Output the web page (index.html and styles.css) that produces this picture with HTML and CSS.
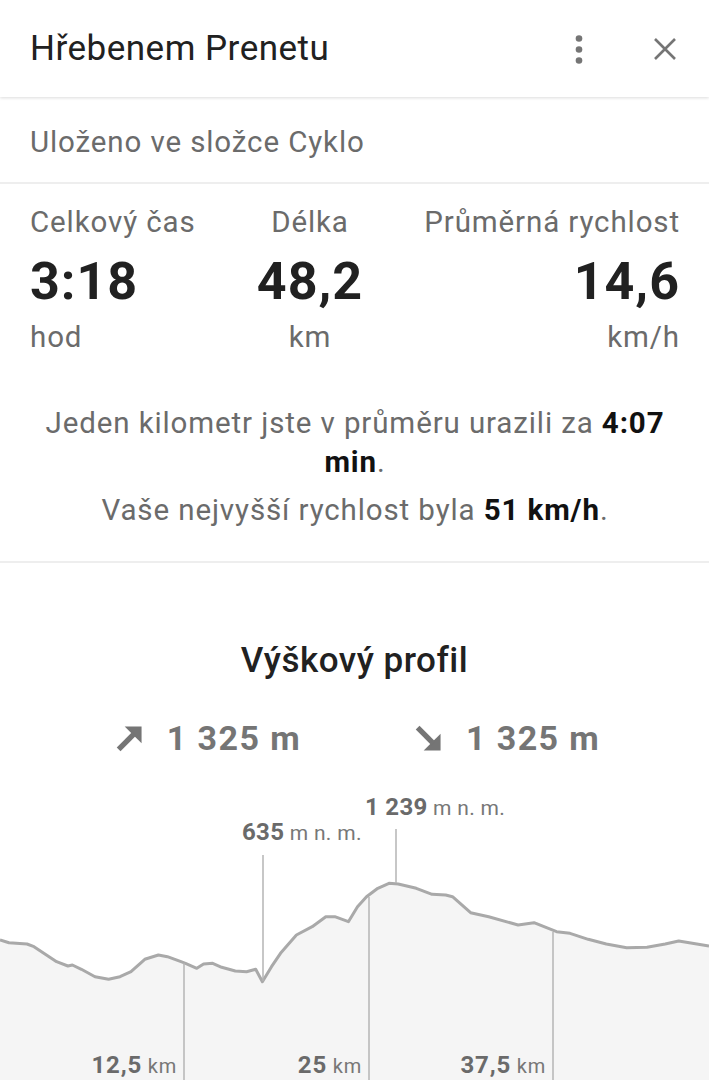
FILE: index.html
```html
<!DOCTYPE html>
<html lang="cs">
  <head>
    <meta charset="UTF-8" />
    <title>Hřebenem Prenetu</title>
    <link rel="stylesheet" href="styles.css">
  </head>
  <body>
    <header class="topbar">
      <h1>Hřebenem Prenetu</h1>
      <div class="actions">
        <!-- more menu -->
        <svg class="icon" viewBox="0 0 24 24" width="24" height="24">
          <circle cx="12" cy="1.5" r="3.3" />
          <circle cx="12" cy="12.5" r="3.3" />
          <circle cx="12" cy="23.5" r="3.3" />
        </svg>
        <!-- close -->
        <svg class="icon" viewBox="0 0 24 24" width="24" height="24">
          <path d="M2 2 L22 22 M22 2 L2 22" class="stroke" />
        </svg>
      </div>
    </header>

    <div class="folder">Uloženo ve složce Cyklo</div>

    <section class="stats">
      <div class="stats-row">
        <div class="stat">
          <div class="stat-label">Celkový čas</div>
          <div class="stat-value">3:18</div>
          <div class="stat-unit">hod</div>
        </div>
        <div class="stat">
          <div class="stat-label">Délka</div>
          <div class="stat-value">48,2</div>
          <div class="stat-unit">km</div>
        </div>
        <div class="stat">
          <div class="stat-label">Průměrná rychlost</div>
          <div class="stat-value">14,6</div>
          <div class="stat-unit">km/h</div>
        </div>
      </div>

      <div class="notes">
        <p>Jeden kilometr jste v průměru urazili za <b>4:07</b> <b>min</b>.</p>
        <p>Vaše nejvyšší rychlost byla <b>51 km/h</b>.</p>
      </div>
    </section>

    <section class="elevation">
      <h2>Výškový profil</h2>

      <div class="gain">
        <div class="gain-item">
          <svg class="arrow" viewBox="0 0 24 24" width="29" height="29">
            <polygon points="8,2 22,2 22,16" />
            <line x1="3" y1="21" x2="16" y2="8" />
          </svg>
          <span>1 325 m</span>
        </div>
        <div class="gain-item">
          <svg class="arrow" viewBox="0 0 24 24" width="29" height="29">
            <polygon points="8,22 22,22 22,8" />
            <line x1="3" y1="3" x2="16" y2="16" />
          </svg>
          <span>1 325 m</span>
        </div>
      </div>

      <svg class="chart" viewBox="0 0 709 340" width="709" height="340">
        <path class="area" d="M0,160 L9,162.7 L27,164 L34,166.7 L56.6,181.7 L67.9,186 L72.4,185 L81.4,189.3 L95,196.7 L108.6,199.3 L120,196.7 L131,191.7 L144.8,179.3 L158.4,175 L167.4,176.7 L181,181.7 L185.5,183.3 L196.8,188.3 L203.6,184 L212.7,183.3 L221.7,187.3 L235.3,191 L246.6,191.7 L255.7,189.3 L262.4,201.7 L271.5,186.7 L280.5,173.3 L296.4,155 L312.2,146.7 L325.8,136.7 L334.8,136.7 L348.4,141.7 L357.5,126.7 L366.5,116.7 L377.8,108.3 L389,103.3 L398.2,104 L416.3,108.3 L432.1,114.3 L445.7,115 L452.5,116.7 L470.6,132.7 L488.7,136.7 L518.1,145 L534,142.7 L556.6,151.7 L570,153.3 L588.2,159.3 L606.3,164 L626.7,167.7 L647,167.3 L665.2,164 L678.7,161 L692.3,163.3 L709,166 L709,340 L0,340 Z" />
        <path class="line" d="M0,160 L9,162.7 L27,164 L34,166.7 L56.6,181.7 L67.9,186 L72.4,185 L81.4,189.3 L95,196.7 L108.6,199.3 L120,196.7 L131,191.7 L144.8,179.3 L158.4,175 L167.4,176.7 L181,181.7 L185.5,183.3 L196.8,188.3 L203.6,184 L212.7,183.3 L221.7,187.3 L235.3,191 L246.6,191.7 L255.7,189.3 L262.4,201.7 L271.5,186.7 L280.5,173.3 L296.4,155 L312.2,146.7 L325.8,136.7 L334.8,136.7 L348.4,141.7 L357.5,126.7 L366.5,116.7 L377.8,108.3 L389,103.3 L398.2,104 L416.3,108.3 L432.1,114.3 L445.7,115 L452.5,116.7 L470.6,132.7 L488.7,136.7 L518.1,145 L534,142.7 L556.6,151.7 L570,153.3 L588.2,159.3 L606.3,164 L626.7,167.7 L647,167.3 L665.2,164 L678.7,161 L692.3,163.3 L709,166" />

        <!-- min / max markers -->
        <line class="tick" x1="263" y1="75" x2="263" y2="201" />
        <line class="tick" x1="396" y1="49" x2="396" y2="103" />
        <text x="242" y="60"><tspan class="num">635</tspan> m n. m.</text>
        <text x="365" y="35"><tspan class="num">1 239</tspan> m n. m.</text>

        <!-- distance markers -->
        <line class="tick" x1="184" y1="183" x2="184" y2="340" />
        <line class="tick" x1="369" y1="117" x2="369" y2="340" />
        <line class="tick" x1="553" y1="152" x2="553" y2="340" />
        <text class="km" x="177" y="293"><tspan class="num">12,5</tspan> km</text>
        <text class="km" x="362" y="293"><tspan class="num">25</tspan> km</text>
        <text class="km" x="546" y="293"><tspan class="num">37,5</tspan> km</text>
      </svg>
    </section>
  </body>
</html>
```

FILE: styles.css
```css
/* General */
body {
  margin: 0;
  font-family: Roboto, "Noto Sans", sans-serif;
  background: #fff;
  color: #212121;
}

/* Top bar */
.topbar {
  height: 97px;
  display: flex;
  align-items: center;
  padding: 0 32px 0 30px;
  box-shadow: 0 1px 3px rgba(0, 0, 0, 0.14);
  position: relative;
}

.topbar h1 {
  margin: 0;
  font-size: 35px;
  font-weight: 400;
  line-height: 40px;
  letter-spacing: 0.5px;
  color: #212121;
}

.actions {
  margin-left: auto;
  display: flex;
  align-items: center;
  gap: 62px;
}

.icon {
  display: block;
  overflow: visible;
  fill: #757575;
}

.icon .stroke {
  stroke: #757575;
  stroke-width: 2.6;
  fill: none;
}

/* Folder line */
.folder {
  padding: 28px 30px 23px;
  font-size: 29.5px;
  line-height: 34px;
  letter-spacing: 0.03em;
  color: #6b6b6b;
  border-bottom: 2px solid #eeeeee;
}

/* Stats */
.stats {
  padding: 21px 29px 31px 30px;
  border-bottom: 2px solid #eeeeee;
}

.stats-row {
  display: flex;
  justify-content: space-between;
}

.stat:nth-child(2) {
  text-align: center;
}

.stat:last-child {
  text-align: right;
}

.stat-label,
.stat-unit {
  font-size: 29.5px;
  line-height: 34px;
  letter-spacing: 0.03em;
  color: #6b6b6b;
}

.stat-value {
  margin-top: 13px;
  font-size: 52px;
  font-weight: 700;
  line-height: 60px;
  letter-spacing: 1px;
  color: #212121;
}

.stat-unit {
  margin-top: 8px;
}

.notes {
  margin-top: 50px;
  text-align: center;
  font-size: 29.5px;
  line-height: 39px;
  letter-spacing: 0.03em;
  color: #6b6b6b;
}

.notes p {
  margin: 0;
}

.notes p + p {
  margin-top: 9px;
}

.notes b {
  color: #111;
  font-weight: 700;
}

/* Elevation profile */
.elevation {
  padding-top: 78px;
  text-align: center;
}

.elevation h2 {
  margin: 0;
  font-size: 35px;
  font-weight: 500;
  line-height: 40px;
  letter-spacing: 0.5px;
  color: #212121;
}

.gain {
  margin-top: 37px;
  display: flex;
  justify-content: center;
  gap: 113px;
  padding-left: 6px;
  font-size: 34px;
  font-weight: 700;
  line-height: 40px;
  letter-spacing: 1.4px;
  color: #757575;
}

.gain-item {
  display: flex;
  align-items: center;
  gap: 23px;
}

.arrow {
  fill: #757575;
  stroke: #757575;
  stroke-width: 4.4;
}

.arrow polygon {
  stroke: none;
}

.chart {
  display: block;
  margin-top: 22px;
}

.chart .area {
  fill: #f5f5f5;
}

.chart .line {
  fill: none;
  stroke: #a9a9a9;
  stroke-width: 3;
  stroke-linejoin: round;
}

.chart .tick {
  stroke: #b5b5b5;
  stroke-width: 1.5;
}

.chart text {
  font-family: Roboto, sans-serif;
  font-size: 21px;
  letter-spacing: 0.3px;
  fill: #777;
}

.chart text.km {
  text-anchor: end;
  font-size: 20px;
  letter-spacing: 0.8px;
}

.chart .num {
  font-size: 24px;
  font-weight: 700;
  fill: #6a6a6a;
}
```
